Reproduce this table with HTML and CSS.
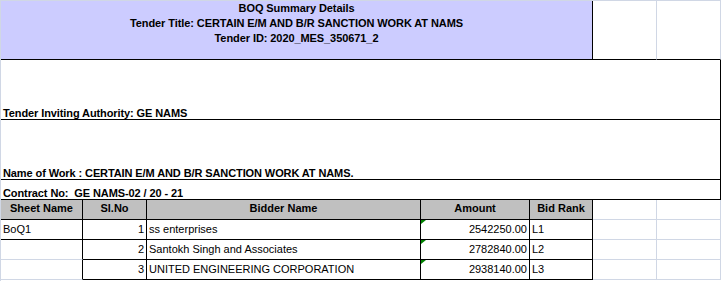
FILE: index.html
```html
<!DOCTYPE html>
<html>
<head>
<meta charset="utf-8">
<link rel="stylesheet" href="styles.css">
</head>
<body>
<div class="sheet">
  <div class="cell title">
    <div>BOQ Summary Details</div>
    <div>Tender Title: CERTAIN E/M AND B/R SANCTION WORK AT NAMS</div>
    <div>Tender ID: 2020_MES_350671_2</div>
  </div>
  <div class="cell grid-r black-b"></div>
  <div class="cell grid-r black-b"></div>

  <div class="cell info"><span>Tender Inviting Authority: GE NAMS</span></div>
  <div class="cell info"><span>Name of Work : CERTAIN E/M AND B/R SANCTION WORK AT NAMS.</span></div>
  <div class="cell info"><span>Contract No:&nbsp; GE NAMS-02 / 20 - 21</span></div>

  <div class="cell head">Sheet Name</div>
  <div class="cell head">Sl.No</div>
  <div class="cell head">Bidder Name</div>
  <div class="cell head">Amount</div>
  <div class="cell head">Bid Rank</div>
  <div class="cell plain"></div>
  <div class="cell plain"></div>

  <div class="cell data">BoQ1</div>
  <div class="cell data num">1</div>
  <div class="cell data">ss enterprises</div>
  <div class="cell data num amt">2542250.00</div>
  <div class="cell data">L1</div>
  <div class="cell plain"></div>
  <div class="cell plain"></div>

  <div class="cell data open"></div>
  <div class="cell data num">2</div>
  <div class="cell data">Santokh Singh and Associates</div>
  <div class="cell data num amt">2782840.00</div>
  <div class="cell data">L2</div>
  <div class="cell plain"></div>
  <div class="cell plain"></div>

  <div class="cell data open"></div>
  <div class="cell data num">3</div>
  <div class="cell data">UNITED ENGINEERING CORPORATION</div>
  <div class="cell data num amt">2938140.00</div>
  <div class="cell data">L3</div>
  <div class="cell plain"></div>
  <div class="cell plain"></div>
</div>
</body>
</html>
```

FILE: styles.css
```css
html, body {
  margin: 0;
  padding: 0;
  background: #ffffff;
}

.sheet {
  width: 721px;
  height: 281px;
  box-sizing: border-box;
  border-top: 1px solid #d0d7e5;
  border-left: 1px solid #d0d7e5;
  display: grid;
  grid-template-columns: 82px 64px 274px 109px 63px 64px 64px;
  grid-template-rows: 59px 60px 60px 20px 20px 20px 20px 20px;
  font-family: "Liberation Sans", Arial, sans-serif;
  font-size: 11px;
  color: #000;
}

.cell {
  box-sizing: border-box;
  border-right: 1px solid #000;
  border-bottom: 1px solid #000;
  padding: 0 2px;
  white-space: nowrap;
  overflow: hidden;
  position: relative;
}

.title {
  grid-column: 1 / 6;
  background: #ccccff;
  font-weight: bold;
  text-align: center;
  line-height: 15px;
  letter-spacing: -0.08px;
}

.grid-r {
  border-right-color: #d0d7e5;
}

.black-b {
  border-bottom-color: #000;
}

.info {
  grid-column: 1 / 8;
  font-weight: bold;
  display: flex;
  align-items: flex-end;
  line-height: 12px;
  padding-bottom: 0;
  letter-spacing: -0.1px;
}

.head {
  background: #c0c0c0;
  font-weight: bold;
  text-align: center;
  line-height: 17px;
}

.plain {
  border-right-color: #d0d7e5;
  border-bottom-color: #d0d7e5;
}

.data {
  display: flex;
  align-items: flex-end;
  line-height: 14px;
  padding-bottom: 3px;
}

.num {
  justify-content: flex-end;
}

.open {
  border-bottom-color: #d0d7e5;
}

.amt::before {
  content: "";
  position: absolute;
  top: 0;
  left: 0;
  width: 0;
  height: 0;
  border-top: 4px solid #008000;
  border-right: 5px solid transparent;
}
```
